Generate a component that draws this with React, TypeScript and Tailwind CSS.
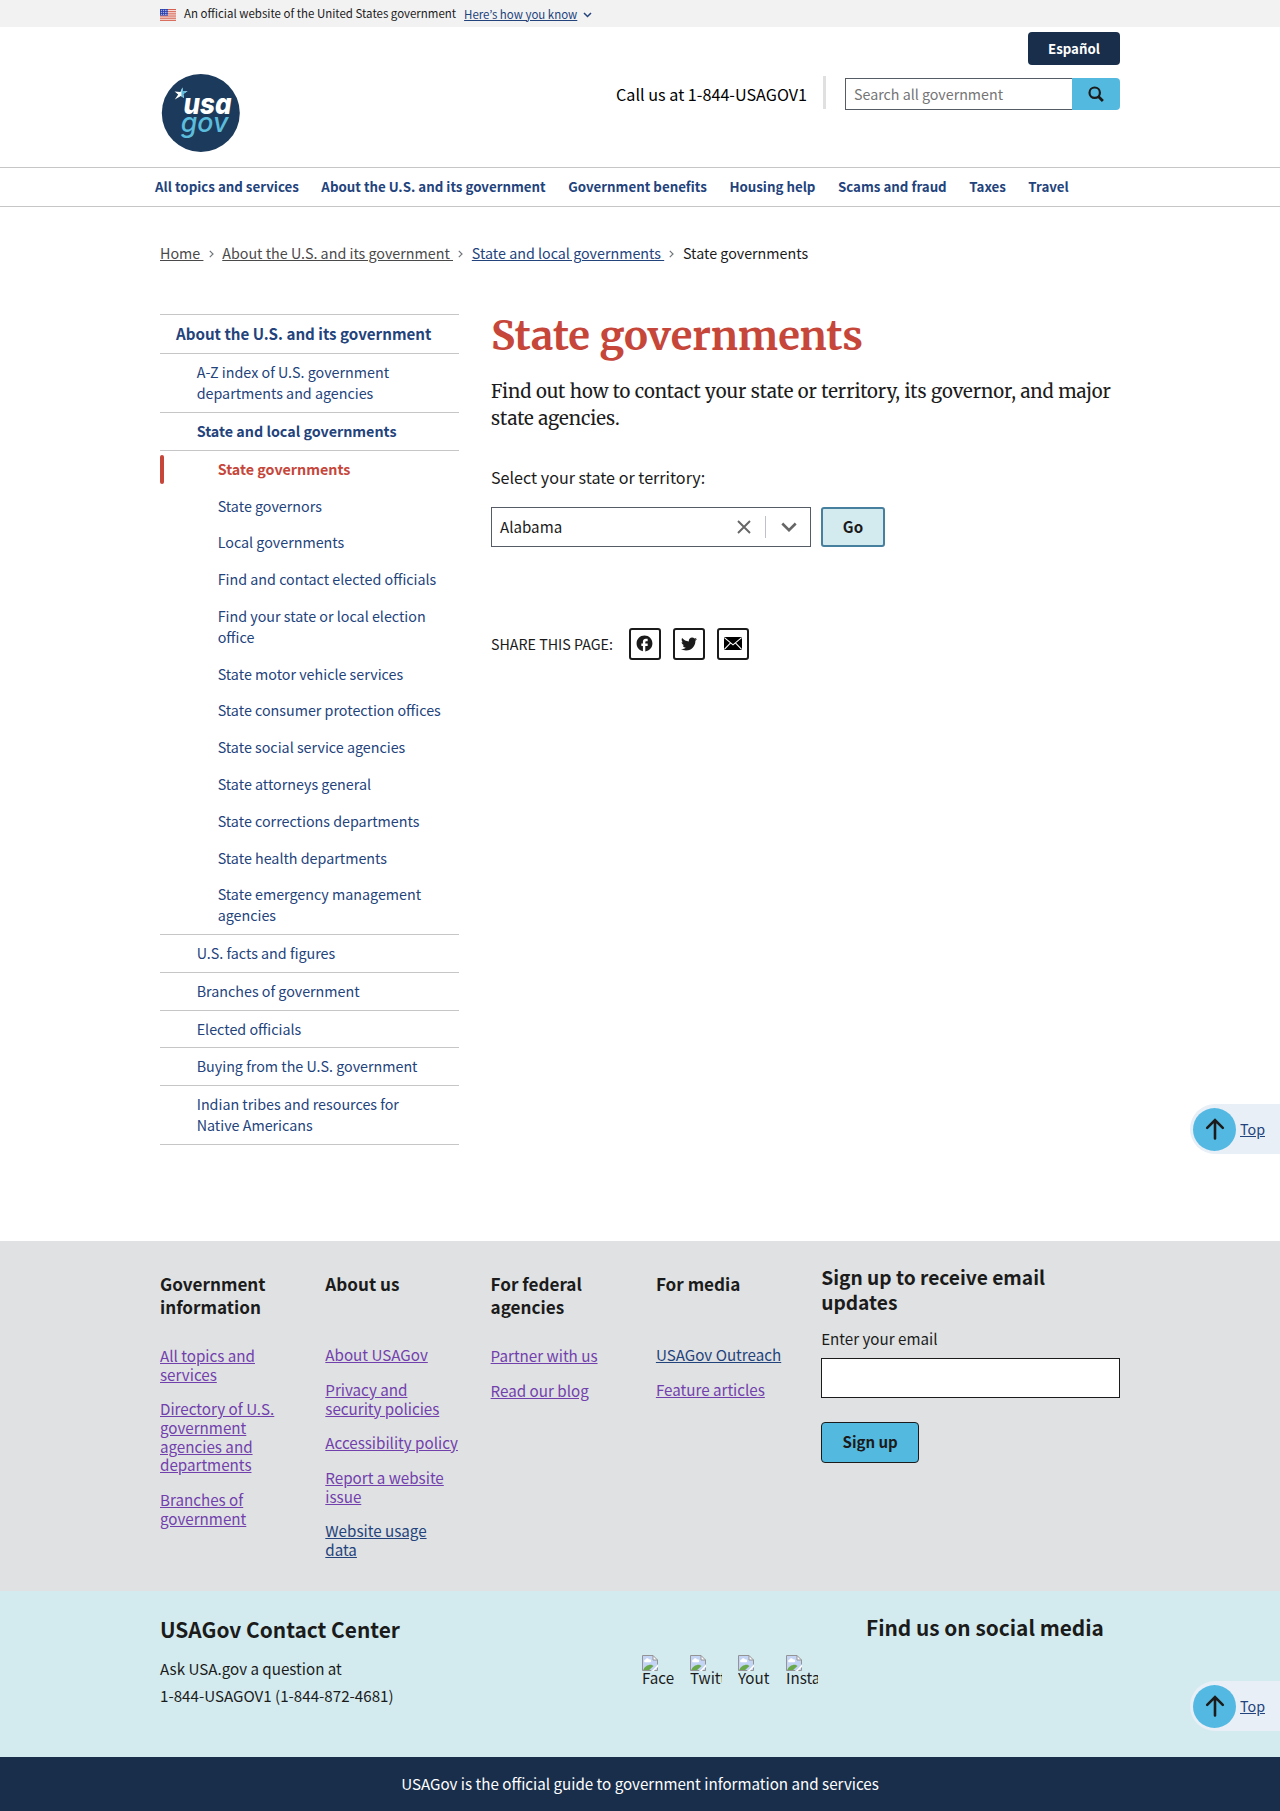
import type { ReactNode } from 'react';
import { FaTwitter } from 'react-icons/fa';
import { MdFacebook } from 'react-icons/md';

const navItems = [
  'All topics and services',
  'About the U.S. and its government',
  'Government benefits',
  'Housing help',
  'Scams and fraud',
  'Taxes',
  'Travel',
];

const stateLinks = [
  'State governors',
  'Local governments',
  'Find and contact elected officials',
  'Find your state or local election office',
  'State motor vehicle services',
  'State consumer protection offices',
  'State social service agencies',
  'State attorneys general',
  'State corrections departments',
  'State health departments',
  'State emergency management agencies',
];

const moreTopics = [
  'U.S. facts and figures',
  'Branches of government',
  'Elected officials',
  'Buying from the U.S. government',
  'Indian tribes and resources for Native Americans',
];

type FooterColumn = { title: string; short?: boolean; links: { label: string; visited?: boolean }[] };

const footerColumns: FooterColumn[] = [
  {
    title: 'Government information',
    links: [
      { label: 'All topics and services', visited: true },
      { label: 'Directory of U.S. government agencies and departments', visited: true },
      { label: 'Branches of government', visited: true },
    ],
  },
  {
    title: 'About us',
    short: true,
    links: [
      { label: 'About USAGov', visited: true },
      { label: 'Privacy and security policies', visited: true },
      { label: 'Accessibility policy', visited: true },
      { label: 'Report a website issue', visited: true },
      { label: 'Website usage data' },
    ],
  },
  {
    title: 'For federal agencies',
    links: [
      { label: 'Partner with us', visited: true },
      { label: 'Read our blog', visited: true },
    ],
  },
  {
    title: 'For media',
    short: true,
    links: [{ label: 'USAGov Outreach' }, { label: 'Feature articles', visited: true }],
  },
];

function Flag() {
  return (
    <svg width="16" height="12" viewBox="0 0 16 12" className="mt-[2px]">
      <rect width="16" height="12" fill="#fbf3f2" />
      {[0, 2.15, 4.3, 6.45, 8.6, 10.75].map((y) => (
        <rect key={y} y={y} width="16" height="1.15" fill="#d5604f" />
      ))}
      <rect width="8" height="6.6" fill="#2b3fae" />
      {[1.2, 3.2, 5.2].map((y) =>
        [1.3, 3.3, 5.3, 7].map((x) => <circle key={`${x}-${y}`} cx={x} cy={y} r="0.5" fill="#fff" />),
      )}
    </svg>
  );
}

function Banner() {
  return (
    <div className="h-[27px] bg-[#f2f2f2]">
      <div className="mx-auto flex h-full w-[960px] items-center text-[11.48px] leading-5">
        <Flag />
        <span className="-mt-[2px] ml-2">An official website of the United States government</span>
        <a className="ml-[8px] text-[#23437c] underline">Here’s how you know</a>
        <svg width="9" height="6" viewBox="0 0 9 6" className="mt-[3px] ml-[6px]" fill="none" stroke="#23437c" strokeWidth="1.5">
          <path d="M1 1l3.5 3.5L8 1" />
        </svg>
      </div>
    </div>
  );
}

function Logo() {
  return (
    <svg width="82" height="80" viewBox="-0.8 0 82 80">
      <circle cx="40" cy="40" r="39" fill="#1c3a5b" />
      <path d="M13.8 18.6l5.8.4 2-4.4.6 4 4.6-.6-4.3 3 .7 4-3.2-2-6 3.6 3.4-5z" fill="#fff" />
      <path d="M20.6 16.8l1-2.4.7 4.2 4.3-.4-4.2 2.7.6 4-2.4-1.6z" fill="#54bbe0" />
      <g fontFamily="Inter, sans-serif" fontStyle="italic" style={{ fontFeatureSettings: '"cv11"' }}>
        <text x="22.8" y="41.4" fontSize="29" fontWeight="800" fill="#fff" textLength="48" lengthAdjust="spacingAndGlyphs">
          usa
        </text>
        <text x="20" y="59.2" fontSize="27" fontWeight="500" fill="#5bbcdc" textLength="47.6" lengthAdjust="spacingAndGlyphs">
          gov
        </text>
      </g>
    </svg>
  );
}

function Header() {
  return (
    <header className="mx-auto flex h-[140px] w-[960px] justify-between">
      <div className="pt-[46px]">
        <Logo />
      </div>
      <div className="flex flex-col items-end pt-[5px]">
        <button className="h-[33px] w-[92px] rounded-[4px] bg-[#192e4b] text-[13.25px] leading-5 font-bold text-white">
          Español
        </button>
        <div className="mt-[11px] flex h-[36px] items-center">
          <span className="text-[16.18px] leading-6 text-black">Call us at 1-844-USAGOV1</span>
          <span className="mr-[19px] ml-[16px] h-[33px] w-[3px] self-start bg-[#e0e0e0]" />
          <div className="flex h-8 w-[275px]">
            <div className="flex flex-1 items-center border border-r-0 border-[#565c65] pl-2 text-[14.26px] leading-5 text-[#757575]">
              Search all government
            </div>
            <div className="flex w-12 items-center justify-center rounded-r-[4px] bg-[#54b9df]">
              <svg width="16" height="16" viewBox="0 0 16 16" fill="none" stroke="#1b1b1b" strokeWidth="2.2">
                <circle cx="6.7" cy="6.7" r="5.2" />
                <path d="M10.4 10.4l4.5 4.5" strokeWidth="2.8" />
              </svg>
            </div>
          </div>
        </div>
      </div>
    </header>
  );
}

function NavBar() {
  return (
    <nav className="h-10 border-y border-[#c6c6c6]">
      <div className="mx-auto flex h-full w-[970px] items-center gap-[22.5px] text-[13.32px] leading-5 font-bold text-[#23437c]">
        {navItems.map((item) => (
          <a key={item}>{item}</a>
        ))}
      </div>
    </nav>
  );
}

function CrumbArrow() {
  return (
    <svg width="5" height="8" viewBox="0 0 5 8" className="mt-px mr-[8.5px] ml-[5.3px]" fill="none" stroke="#71767a" strokeWidth="1.2">
      <path d="M0.8 0.8L4 4 0.8 7.2" />
    </svg>
  );
}

function Breadcrumbs() {
  return (
    <div className="mt-9 flex h-5 items-center text-[14.31px] leading-5 text-[#1b1b1b]">
      <a className="text-[#4a4a4a] underline">Home&nbsp;</a>
      <CrumbArrow />
      <a className="text-[#4a4a4a] underline">About the U.S. and its government&nbsp;</a>
      <CrumbArrow />
      <a className="text-[#23437c] underline">State and local governments&nbsp;</a>
      <CrumbArrow />
      <span>State governments</span>
    </div>
  );
}

function SideItem({ children, className = '' }: { children: ReactNode; className?: string }) {
  return (
    <li className={`border-t border-[#c6c6c6] py-2 pr-4 pl-[36.7px] ${className}`}>
      <a>{children}</a>
    </li>
  );
}

function SideNav() {
  return (
    <ul className="w-[299px] shrink-0 border-b border-[#c6c6c6] text-[14.31px] leading-[20.8px] text-[#23437c]">
      <li className="border-t border-[#c6c6c6] pt-[7px] pb-[9.4px] pl-4 text-[15.17px] leading-[22.05px] font-bold">
        <a>About the U.S. and its government</a>
      </li>
      <SideItem>A-Z index of U.S. government departments and agencies</SideItem>
      <SideItem className="font-bold">State and local governments</SideItem>
      <li className="border-t border-[#c6c6c6]">
        <ul>
          <li className="flex items-center py-1 font-bold text-[#c6463a]">
            <span className="h-[28.8px] w-1 rounded-full bg-[#c6463a]" />
            <a className="pl-[53.7px]">State governments</a>
          </li>
          {stateLinks.map((label) => (
            <li key={label} className="py-2 pr-2 pl-[57.7px]">
              <a>{label}</a>
            </li>
          ))}
        </ul>
      </li>
      {moreTopics.map((label) => (
        <SideItem key={label}>{label}</SideItem>
      ))}
    </ul>
  );
}

function ShareBox({ children }: { children: ReactNode }) {
  return (
    <a className="flex h-8 w-8 items-center justify-center rounded-[3px] border-2 border-[#1b1b1b] text-[#1b1b1b]">
      {children}
    </a>
  );
}

function Main() {
  return (
    <main className="ml-8 flex-1">
      <h1 className="-mt-[2px] font-['Merriweather','Noto_Serif',serif] text-[40px] leading-[48px] font-bold text-[#c6463a]">
        State governments
      </h1>
      <p className="mt-[17.6px] font-['Merriweather','Noto_Serif',serif] text-[18.53px] leading-[27px] text-[#1b1b1b]">
        Find out how to contact your state or territory, its governor, and major state agencies.
      </p>
      <div className="mt-[33.4px] text-[16.14px] leading-6">Select your state or territory:</div>
      <div className="mt-[18px] flex gap-[10px]">
        <div className="flex h-10 w-80 items-center border border-[#565c65] pl-2">
          <span className="flex-1 pb-[2px] text-[15.14px] leading-6">Alabama</span>
          <svg width="14" height="14" viewBox="0 0 14 14" stroke="#666" strokeWidth="1.9">
            <path d="M1 1l12 12M13 1L1 13" />
          </svg>
          <span className="ml-[14px] h-[22px] w-px bg-[#bfc1c8]" />
          <svg width="16" height="10" viewBox="0 0 16 10" className="mr-[13px] ml-[15px]" fill="none" stroke="#666" strokeWidth="2.6">
            <path d="M1.3 1.5L8 8.2l6.7-6.7" />
          </svg>
        </div>
        <button className="h-10 w-16 rounded-[3px] border-2 border-[#477f9f] bg-[#d3ebef] pb-[2px] text-[15.1px] leading-5 font-bold">
          Go
        </button>
      </div>
      <div className="mt-[81px] flex items-center gap-3">
        <span className="mr-1 text-[14.25px] leading-5">SHARE THIS PAGE:</span>
        <ShareBox>
          <MdFacebook size={19} />
        </ShareBox>
        <ShareBox>
          <FaTwitter size={16} />
        </ShareBox>
        <ShareBox>
          <svg width="18" height="13" viewBox="0 0 18 13">
            <rect width="18" height="13" rx="0.8" fill="#000" />
            <path d="M0.4 0.6L9 7.8l8.6-7.2M0.4 12.4l6.2-6.5M17.6 12.4l-6.2-6.5" fill="none" stroke="#fff" strokeWidth="1.1" />
          </svg>
        </ShareBox>
      </div>
    </main>
  );
}

function TopLink({ className }: { className: string }) {
  return (
    <a
      className={`absolute right-0 flex h-[50px] w-[90px] items-center rounded-l-full bg-[#e8eff6] pl-[3px] text-[14.28px] leading-5 text-[#23437c] ${className}`}
    >
      <span className="flex h-[43px] w-[43px] items-center justify-center rounded-full bg-[#54b9e2]">
        <svg width="20" height="22" viewBox="0 0 20 22" fill="none" stroke="#1b1b1b" strokeWidth="2.6" strokeLinecap="round">
          <path d="M10 20.4V2.6M2.2 9.8L10 2l7.8 7.8" />
        </svg>
      </span>
      <span className="ml-1 underline">Top</span>
    </a>
  );
}

function BrokenImage({ label }: { label: string }) {
  return (
    <div className="w-8 overflow-hidden">
      <svg width="16" height="16" viewBox="0 0 16 16">
        <path d="M0.5 0.5h10.5l4.5 4.5v10.5h-15z" fill="#c3d4f5" />
        <path d="M2.5 7.2a1.6 1.6 0 0 1 1-2.6 2 2 0 0 1 3.6-.2 1.5 1.5 0 0 1 1.2 2.8z" fill="#fff" />
        <path d="M1 15.3c1.5-3.8 5-6 8.5-5.6l2 1.2-4.6 4.4z" fill="#6aa84c" />
        <path d="M9.8 16L16 9.6v2.2L12 16z" fill="#fff" />
        <path d="M11 0.5V5h4.5z" fill="#fff" />
        <path d="M0.5 15.5V0.5h10.5l4.5 4.5v4.5M11 0.5V5h4.5M0.5 15.5h8.7M12.5 15.5h3v-3" fill="none" stroke="#949494" />
      </svg>
      <div className="-mt-[4px] text-[15.17px] leading-5 whitespace-nowrap">{label}</div>
    </div>
  );
}

function Footer() {
  return (
    <footer>
      <div className="h-[350px] bg-[#dfe1e2]">
        <div className="mx-auto flex w-[960px] gap-8">
          {footerColumns.map((column) => (
            <div key={column.title} className="w-[133.3px] pt-[31px]">
              <h3 className={`w-[120px] text-[17.12px] leading-[23.3px] font-bold ${column.short ? 'h-[46.1px]' : 'h-[46.8px]'}`}>
                {column.title}
              </h3>
              <ul className="mt-[27.2px] flex flex-col gap-4 text-[15.18px] leading-[18.66px]">
                {column.links.map((link) => (
                  <li key={link.label}>
                    <a className={link.visited ? 'text-[#7240ad] underline' : 'text-[#23437c] underline'}>{link.label}</a>
                  </li>
                ))}
              </ul>
            </div>
          ))}
          <div className="flex-1 pt-[24px]">
            <h3 className="text-[19.18px] leading-[24.8px] font-bold">Sign up to receive email updates</h3>
            <div className="mt-[11.5px] text-[15.17px] leading-6">Enter your email</div>
            <div className="mt-[7.9px] h-10 border border-[#1b1b1b] bg-white" />
            <button className="mt-6 h-[41px] w-[98px] rounded-[4px] border border-[#1b1b1b] bg-[#54b9df] pb-px text-[15.05px] leading-5 font-bold">
              Sign up
            </button>
          </div>
        </div>
      </div>
      <div className="h-[166px] bg-[#d3ebef]">
        <div className="mx-auto flex w-[960px] justify-between">
          <div className="pt-[23.5px]">
            <h3 className="text-[20.86px] leading-7 font-bold">USAGov Contact Center</h3>
            <p className="mt-[12px] text-[15.17px] leading-[27px]">
              Ask USA.gov a question at
              <br />
              1-844-USAGOV1 (1-844-872-4681)
            </p>
          </div>
          <div className="w-[478px] pt-[22px]">
            <h3 className="ml-[224px] text-[20.84px] leading-7 font-bold">Find us on social media</h3>
            <div className="mt-[14px] flex gap-4">
              {['Face', 'Twitt', 'Yout', 'Insta'].map((name) => (
                <BrokenImage key={name} label={name} />
              ))}
            </div>
          </div>
        </div>
      </div>
      <div className="flex h-[54px] items-center justify-center bg-[#192e4b] pb-[2px] text-[15.17px] leading-6 text-white">
        USAGov is the official guide to government information and services
      </div>
    </footer>
  );
}

export default function App() {
  return (
    <div className="relative h-[1811px] w-[1280px] overflow-hidden bg-white font-['Noto_Sans_CJK_KR',sans-serif] text-[#1b1b1b]">
      <Banner />
      <Header />
      <NavBar />
      <div className="mx-auto flow-root h-[1034px] w-[960px]">
        <Breadcrumbs />
        <div className="mt-[51px] flex items-start">
          <SideNav />
          <Main />
        </div>
      </div>
      <Footer />
      <TopLink className="top-[1104px]" />
      <TopLink className="top-[1681px]" />
    </div>
  );
}
